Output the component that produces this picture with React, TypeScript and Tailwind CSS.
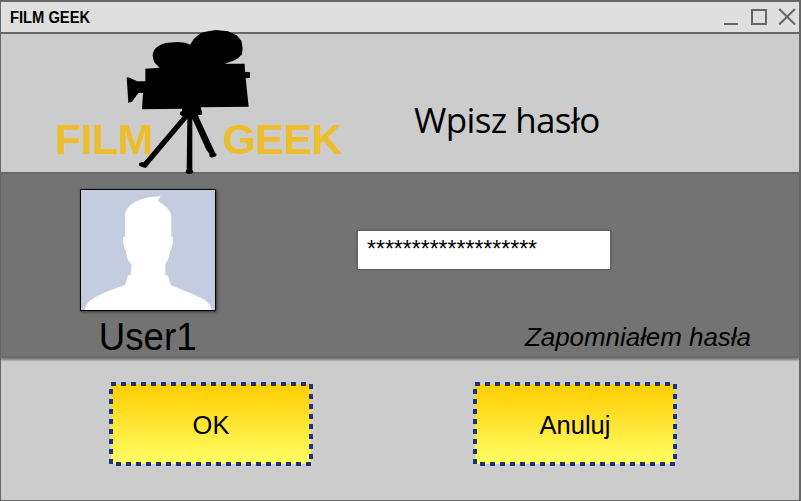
import React from "react";

const sans = "font-['Liberation_Sans',Arial,sans-serif]";

function WindowControls() {
  return (
    <svg className="h-[30px] w-[80px] shrink-0" viewBox="0 0 80 30" fill="none" stroke="#666" strokeWidth="2">
      <path d="M5 22H19" />
      <rect x="33" y="8" width="14" height="14" />
      <path d="M60.200 7L76 22.500M76 7L60.200 22.500" />
    </svg>
  );
}

function CameraIcon() {
  return (
    <svg className="absolute left-[109px] top-[-14px] h-[160px] w-[150px]" viewBox="0 0 450 480" fill="#000">
      <path d="M149 143L134 128Q128 117 128 105Q130 90 140 82Q151 73 166 69L202 66L226 68L240 74L251 58Q263 43 282 36L317 30L354 34L380 46L394 62L398 84L396 103L384 115L370 122L343 131L404 131L405 155L420 157V173L407 175L416 260L272 262L277 279L274 285H264L268 296L316 400L320 402L318 409L305 413L298 409V401L289 389L247 296V449L250 455L247 460L237 462L227 459V453L230 449L232 296L113 437L112 440L106 444L88 438L87 430L95 426L101 427L218 289L210 284V277L216 273V266L96 268L99 219H85L66 245L55 248L50 172L59 173L82 184L106 184V146Z" />
    </svg>
  );
}

function Avatar() {
  return (
    <div className="h-[122px] w-[136px] border border-black bg-[#c4cce0] shadow-[1px_1px_3px_#333]">
      <svg className="block h-[120px] w-[134px]" viewBox="33 30 402 360" fill="#fff">
        <path d="M44 390C48 363 76 350 113 334L166 314L174 286L182 284L185 254C174 245 169 229 168 212C160 205 158 182 160 170H165V106C168 75 204 58 237 52L272 48L264 63C284 76 302 88 304 110V170H309C310 188 306 207 300 213C298 232 293 243 286 251V285L294 287L302 315L354 337C397 354 419 363 425 390Z" />
      </svg>
    </div>
  );
}

function ActionButton({ label }: { label: string }) {
  return (
    <button className={`relative flex h-[80px] w-[200px] items-center justify-center bg-[linear-gradient(to_bottom,#ffcc00,#ffff66)] pt-[2px] text-[25.500px] text-black ${sans}`}>
      <svg className="pointer-events-none absolute inset-0 h-full w-full overflow-visible" viewBox="0 0 200 80" fill="none">
        <rect width="200" height="80" stroke="#1a3380" strokeWidth="4" strokeDasharray="5 5" />
      </svg>
      <span>{label}</span>
    </button>
  );
}

export default function App() {
  return (
    <main className={`flex h-[501px] w-[801px] flex-col overflow-hidden border-b border-l border-r-2 border-t-2 border-[#666] bg-[#ccc] text-black ${sans}`}>
      <header className="flex h-[32px] shrink-0 items-center justify-between border-b-2 border-[#666] bg-[#dfdfdf] pl-[9px]">
        <h1 className="origin-left scale-x-[0.92] pt-px text-[16px] font-bold leading-[30px]">FILM GEEK</h1>
        <WindowControls />
      </header>

      <section className="flex h-[138px] shrink-0">
        <div className="relative flex h-full w-[413px] items-end pb-[9px] pl-[54px] text-[43px] font-bold leading-[48px] tracking-[-0.600px] text-[#edbd2d]">
          <span className="w-[167.500px]">FILM</span>
          <span>GEEK</span>
          <CameraIcon />
        </div>
        <h2 className="pt-[62px] font-['Open_Sans','Noto_Sans',sans-serif] text-[35px] leading-[48px] tracking-[-0.600px]">Wpisz hasło</h2>
      </section>

      <section className="flex h-[186px] shrink-0 border-b-2 border-t-2 border-[#696969] bg-[#737373] shadow-[0_2px_2px_#777]">
        <div className="flex w-[293px] flex-col items-center pt-[15px]">
          <Avatar />
          <div className="scale-x-[0.965] pt-[4px] text-[38px] leading-[44px]">User1</div>
        </div>
        <div className="flex flex-1 flex-col pl-[62px] pt-[55px]">
          <input
            aria-label="Hasło"
            readOnly
            value="*******************"
            className="h-[42px] w-[256px] border-2 border-[#666] bg-white pb-[2px] pl-[9px] text-[23px] outline-none"
          />
          <a className="pl-[169px] pt-[50px] text-[26px] italic leading-[32px] tracking-[-0.060px]">Zapomniałem hasła</a>
        </div>
      </section>

      <section className="flex gap-[164px] pl-[110px] pt-[26px]">
        <ActionButton label="OK" />
        <ActionButton label="Anuluj" />
      </section>
    </main>
  );
}
